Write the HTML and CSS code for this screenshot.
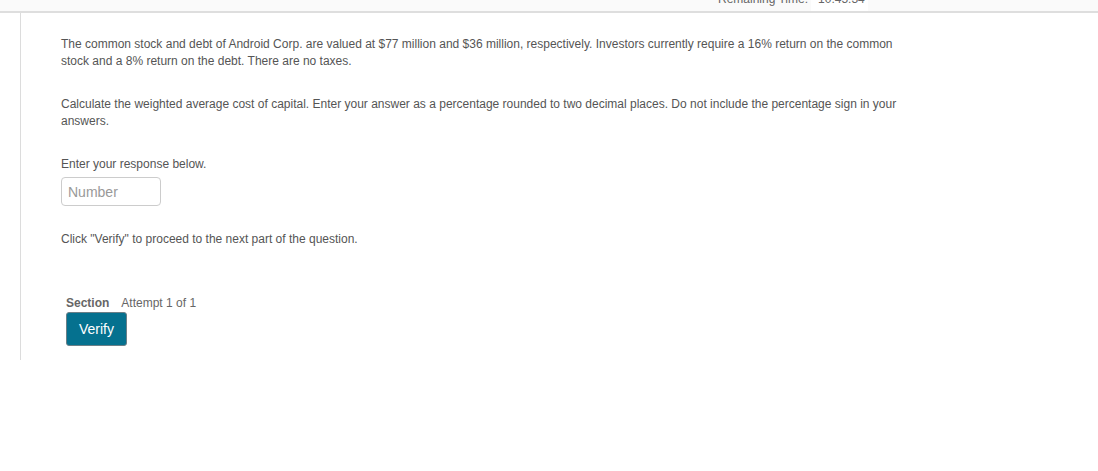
FILE: index.html
```html
<!DOCTYPE html>
<html>
<head>
<meta charset="utf-8">
<link rel="stylesheet" href="styles.css">
</head>
<body>
<header class="topbar">
  <div class="timer"><span class="timer-label">Remaining Time:</span><span class="timer-value">10:45:34</span></div>
</header>
<div class="layout">
  <div class="gutter"></div>
  <main class="content">
    <p class="para">The common stock and debt of Android Corp. are valued at $77 million and $36 million, respectively. Investors currently require a 16% return on the common stock and a 8% return on the debt. There are no taxes.</p>
    <p class="para">Calculate the weighted average cost of capital. Enter your answer as a percentage rounded to two decimal places. Do not include the percentage sign in your answers.</p>
    <p class="prompt">Enter your response below.</p>
    <input class="answer" type="text" placeholder="Number">
    <p class="hint">Click "Verify" to proceed to the next part of the question.</p>
    <div class="section">
      <div class="section-meta"><span class="section-label">Section</span><span class="attempt">Attempt 1 of 1</span></div>
      <button class="verify">Verify</button>
    </div>
  </main>
</div>
</body>
</html>
```
FILE: styles.css
```css
html, body {
  margin: 0;
  padding: 0;
  background: #fff;
  font-family: "Liberation Sans", Arial, sans-serif;
  color: #555;
}
.topbar {
  height: 11px;
  background: #fafafa;
  border-bottom: 2px solid #dedede;
  overflow: hidden;
}
.timer {
  display: flex;
  align-items: flex-start;
  font-size: 12px;
  line-height: 16px;
  margin-top: -9px;
  padding-left: 718px;
  color: #666;
}
.timer-label {
  padding-right: 3px;
}
.timer-value {
  background: #fff;
  padding: 0 3px 4px 7px;
}
.layout {
  display: flex;
}
.gutter {
  width: 20px;
  flex: none;
}
.content {
  border-left: 1px solid #dcdcdc;
  height: 347px;
  padding-left: 40px;
  padding-top: 23px;
  box-sizing: border-box;
  width: 890px;
}
.para {
  font-size: 12px;
  line-height: 17px;
  margin: 0 0 26px 0;
  width: 845px;
}
.prompt {
  font-size: 12px;
  line-height: 17px;
  margin: 0 0 4px 0;
}
.answer {
  display: block;
  width: 100px;
  height: 29px;
  box-sizing: border-box;
  border: 1px solid #ccc;
  border-radius: 4px;
  padding: 0 6px;
  font-family: "Liberation Sans", Arial, sans-serif;
  font-size: 14px;
  color: #555;
  margin: 0;
}
.answer::placeholder {
  color: #999;
}
.hint {
  font-size: 12px;
  line-height: 17px;
  margin: 25px 0 0 0;
}
.section {
  margin-top: 48px;
  padding-left: 5px;
}
.section-meta {
  font-size: 12px;
  line-height: 15px;
  display: flex;
  gap: 12px;
}
.section-label {
  font-weight: bold;
  color: #666;
}
.attempt {
  color: #666;
}
.verify {
  margin-top: 1px;
  width: 61px;
  height: 34px;
  background: #05718f;
  color: #fff;
  border: 1px solid #6b7f87;
  border-radius: 3px;
  font-family: "Liberation Sans", Arial, sans-serif;
  font-size: 14px;
  padding: 0;
}
```
